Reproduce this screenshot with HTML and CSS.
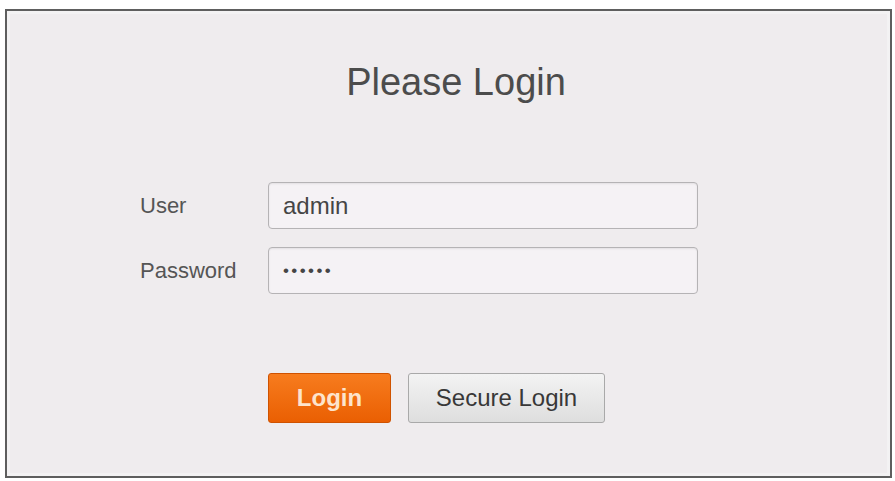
FILE: index.html
```html
<!DOCTYPE html>
<html lang="en">
  <head>
    <meta charset="UTF-8" />
    <meta name="viewport" content="width=device-width, initial-scale=1.0" />
    <title>Please Login</title>
    <link rel="stylesheet" href="styles.css">
  </head>
  <body>
    <div class="login-panel">
      <h1>Please Login</h1>

      <form class="login-form" onsubmit="return false;">
        <div class="form-row">
          <label for="user">User</label>
          <input type="text" id="user" value="admin" />
        </div>

        <div class="form-row">
          <label for="password">Password</label>
          <input type="password" id="password" value="123456" />
        </div>

        <div class="form-actions">
          <button type="submit" class="btn btn-login">Login</button>
          <button type="button" class="btn btn-secure">Secure Login</button>
        </div>
      </form>
    </div>
  </body>
</html>
```

FILE: styles.css
```css
* {
  margin: 0;
  padding: 0;
  box-sizing: border-box;
}

body {
  background-color: #fff;
  font-family: "Liberation Sans", Arial, sans-serif;
}

.login-panel {
  margin: 9px 0 0 5px;
  width: 887px;
  height: 469px;
  border: 2px solid #5e5e5e;
  background-color: #efecee;
  box-shadow: inset 0 0 0 3px #f3f2f3;
}

h1 {
  margin-top: 49px;
  padding-left: 15px;
  text-align: center;
  font-size: 38px;
  font-weight: normal;
  line-height: 44px;
  color: #4c4c4c;
}

.login-form {
  margin-top: 78px;
  padding-left: 133px;
}

.form-row {
  display: flex;
  align-items: center;
  margin-bottom: 18px;
}

label {
  width: 128px;
  font-size: 22px;
  color: #555;
}

input {
  width: 430px;
  height: 47px;
  padding: 0 14px;
  border: 1px solid #b5b3b5;
  border-radius: 4px;
  background-color: #f5f2f5;
  box-shadow: inset 0 1px 2px rgba(0, 0, 0, 0.08);
  font-family: inherit;
  font-size: 24px;
  color: #454545;
  outline: none;
}

input[type="password"] {
  font-size: 17px;
  letter-spacing: 2.4px;
}

.form-actions {
  display: flex;
  gap: 17px;
  margin-top: 79px;
  padding-left: 128px;
}

.btn {
  height: 50px;
  border-radius: 3px;
  font-family: inherit;
  font-size: 24px;
  cursor: pointer;
}

.btn-login {
  width: 123px;
  border: 1px solid #cf5200;
  background: linear-gradient(#f77c1e, #ea5f02);
  color: #fde4cc;
  font-weight: bold;
}

.btn-secure {
  width: 197px;
  border: 1px solid #a9a9a9;
  background: linear-gradient(#f3f3f3, #dedede);
  color: #383838;
}
```
